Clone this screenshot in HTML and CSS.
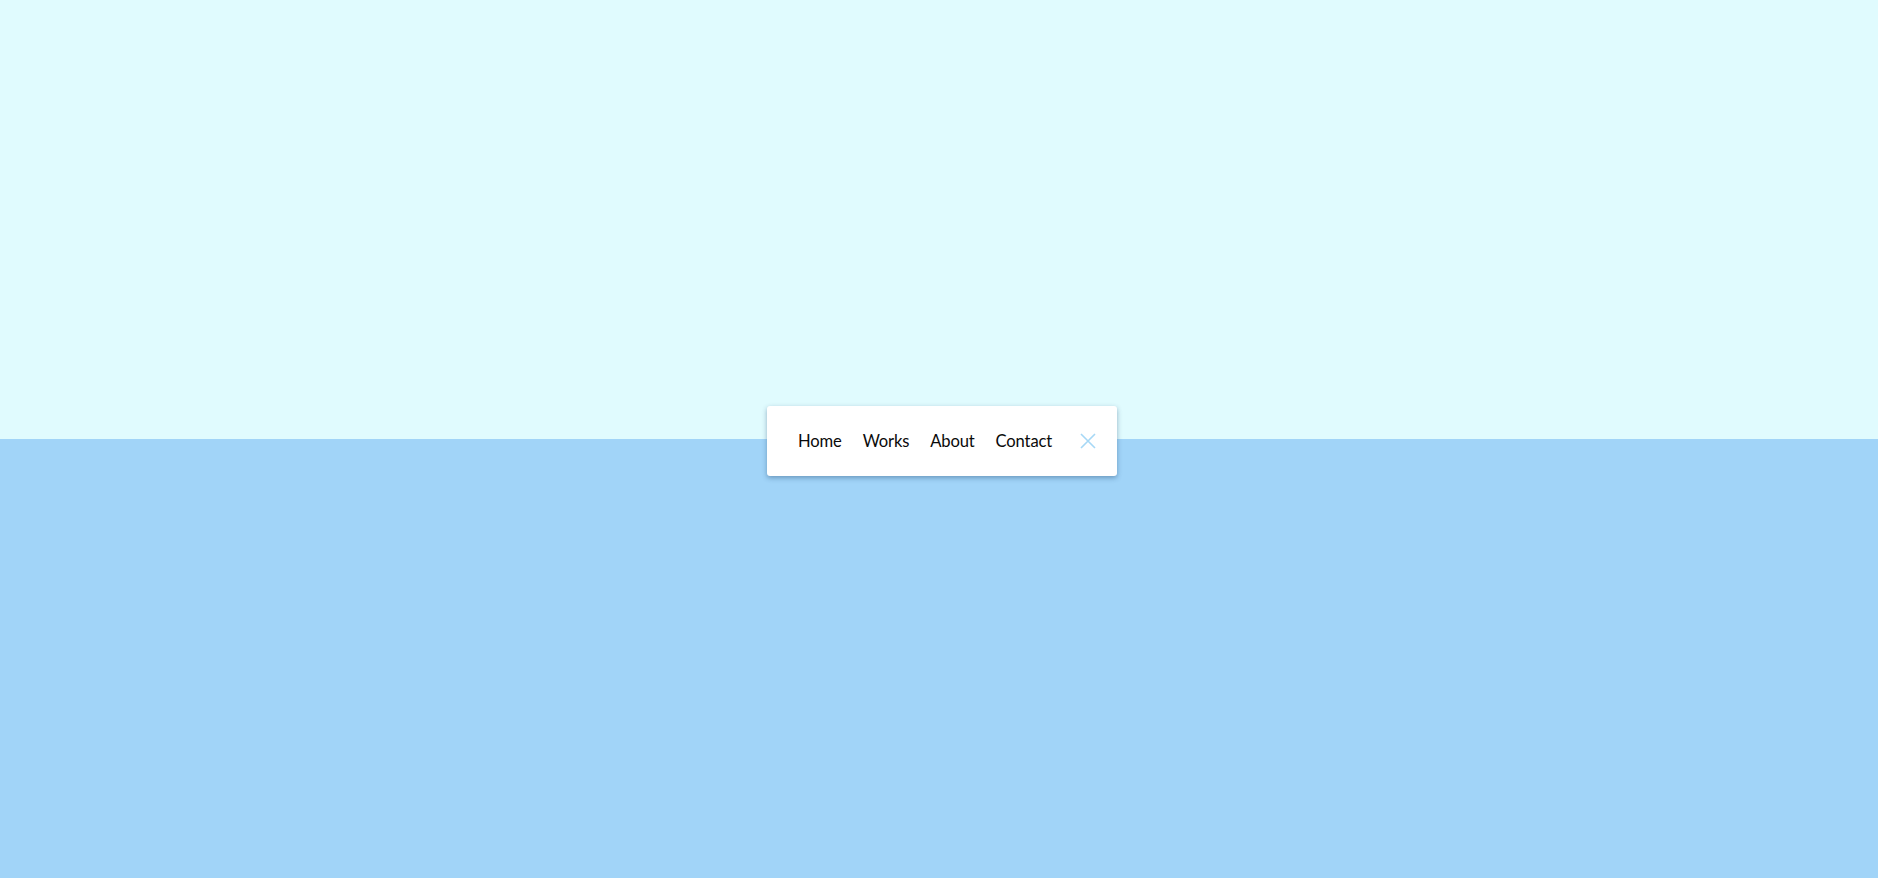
FILE: index.html
```html
<!DOCTYPE html>
<html>
<head>
<meta charset="utf-8">
<link rel="stylesheet" href="styles.css">
</head>
<body>
<div class="page">
  <section class="top"></section>
  <section class="bottom"></section>
  <nav class="menu">
    <a class="link" href="#">Home</a>
    <a class="link" href="#">Works</a>
    <a class="link" href="#">About</a>
    <a class="link" href="#">Contact</a>
    <button class="close" aria-label="Close">
      <svg width="16" height="16" viewBox="0 0 16 16"><path d="M1 1 L15 15 M15 1 L1 15" stroke="#a6d8f6" stroke-width="1.6" fill="none"/></svg>
    </button>
  </nav>
</div>
</body>
</html>
```
FILE: styles.css
```css
html, body {
  margin: 0;
  padding: 0;
}
body {
  font-family: Lato, "Noto Sans", sans-serif;
}
.page {
  position: relative;
  width: 1878px;
  height: 878px;
  display: flex;
  flex-direction: column;
  overflow: hidden;
}
.top {
  height: 439px;
  background: #e0fbfe;
}
.bottom {
  flex: 1;
  background: #a1d4f8;
}
.menu {
  position: absolute;
  left: 767px;
  top: 406px;
  width: 350px;
  height: 70px;
  box-sizing: border-box;
  background: #fff;
  border-radius: 3px;
  box-shadow: 0 2px 5px rgba(40, 80, 120, 0.45);
  display: flex;
  align-items: center;
  padding: 0 21px 0 31px;
}
.link {
  color: #0a0a0a;
  text-decoration: none;
  font-size: 16.6px;
  letter-spacing: -0.15px;
  margin-right: 21px;
  line-height: 1;
}
.link:nth-child(4) {
  margin-right: 28px;
}
.close {
  border: 0;
  background: none;
  padding: 0;
  width: 16px;
  height: 16px;
  display: block;
}
.close svg {
  display: block;
}
```
